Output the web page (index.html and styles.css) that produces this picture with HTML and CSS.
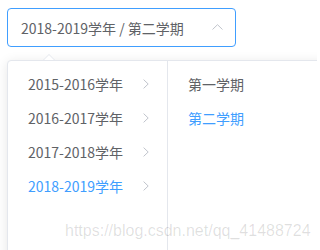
FILE: index.html
```html
<!DOCTYPE html>
<html lang="zh-CN">
<head>
<meta charset="utf-8">
<title>Cascader</title>
<link rel="stylesheet" href="styles.css">
</head>
<body>
<div class="page">
  <div class="cascader">
    <div class="input">
      <span class="value">2018-2019学年 / 第二学期</span>
      <svg class="arrow-up" width="11" height="6" viewBox="0 0 11 6"><path d="M0.5 5.5 L5.5 0.7 L10.5 5.5" fill="none" stroke="#C0C4CC" stroke-width="1"/></svg>
    </div>
    <div class="dropdown">
      <div class="popper-arrow"></div>
      <div class="panel">
        <ul class="menu menu-years">
          <li class="item"><span>2015-2016学年</span><svg class="chev" width="6" height="10" viewBox="0 0 6 10"><path d="M0.6 0.6 L5.2 5 L0.6 9.4" fill="none" stroke="#C0C4CC" stroke-width="1"/></svg></li>
          <li class="item"><span>2016-2017学年</span><svg class="chev" width="6" height="10" viewBox="0 0 6 10"><path d="M0.6 0.6 L5.2 5 L0.6 9.4" fill="none" stroke="#C0C4CC" stroke-width="1"/></svg></li>
          <li class="item"><span>2017-2018学年</span><svg class="chev" width="6" height="10" viewBox="0 0 6 10"><path d="M0.6 0.6 L5.2 5 L0.6 9.4" fill="none" stroke="#C0C4CC" stroke-width="1"/></svg></li>
          <li class="item active"><span>2018-2019学年</span><svg class="chev" width="6" height="10" viewBox="0 0 6 10"><path d="M0.6 0.6 L5.2 5 L0.6 9.4" fill="none" stroke="#C0C4CC" stroke-width="1"/></svg></li>
        </ul>
        <ul class="menu menu-terms">
          <li class="item"><span>第一学期</span></li>
          <li class="item active"><span>第二学期</span></li>
        </ul>
      </div>
    </div>
  </div>
  <div class="watermark">https://blog.csdn.net/qq_41488724</div>
</div>
</body>
</html>
```

FILE: styles.css
```css
html, body {
  margin: 0;
  padding: 0;
  overflow: hidden;
  background: #ffffff;
}
.page {
  position: relative;
  width: 317px;
  height: 250px;
  overflow: hidden;
  padding: 8px 0 0 7px;
  box-sizing: border-box;
  font-family: "Noto Sans CJK SC", "Liberation Sans", sans-serif;
  font-size: 14px;
  color: #606266;
}
.cascader {
  display: flex;
  flex-direction: column;
}
.input {
  box-sizing: border-box;
  width: 229px;
  height: 39px;
  border: 1px solid #409EFF;
  border-radius: 4px;
  display: flex;
  align-items: center;
  padding: 0 12px 0 13px;
}
.value {
  flex: 1;
  line-height: 20px;
  white-space: nowrap;
}
.arrow-up {
  display: block;
  margin-top: -2px;
}
.dropdown {
  position: relative;
  margin-top: 13px;
}
.popper-arrow {
  position: absolute;
  left: 36px;
  top: -6px;
  width: 0;
  height: 0;
  border-left: 6px solid transparent;
  border-right: 6px solid transparent;
  border-bottom: 6px solid #E4E7ED;
  z-index: 2;
}
.popper-arrow::after {
  content: "";
  position: absolute;
  left: -5px;
  top: 1px;
  width: 0;
  height: 0;
  border-left: 5px solid transparent;
  border-right: 5px solid transparent;
  border-bottom: 5px solid #ffffff;
}
.panel {
  display: flex;
  width: 360px;
  height: 204px;
  background: #ffffff;
  border: 1px solid #E4E7ED;
  border-radius: 4px;
  box-shadow: 0 2px 12px 0 rgba(0, 0, 0, 0.1);
  box-sizing: border-box;
}
.menu {
  list-style: none;
  margin: 0;
  padding: 6px 0;
  box-sizing: border-box;
}
.menu-years {
  width: 160px;
  border-right: 1px solid #E4E7ED;
}
.menu-terms {
  flex: 1;
}
.item {
  height: 34px;
  line-height: 34px;
  display: flex;
  align-items: center;
  padding: 0 18px 0 20px;
  white-space: nowrap;
}
.item span {
  flex: 1;
}
.item.active {
  color: #409EFF;
}
.chev {
  display: block;
}
.watermark {
  position: absolute;
  left: 65px;
  top: 223px;
  font-family: "Liberation Sans", Arial, sans-serif;
  font-size: 16px;
  line-height: 16px;
  color: rgba(0, 0, 0, 0.13);
  white-space: nowrap;
}
```
